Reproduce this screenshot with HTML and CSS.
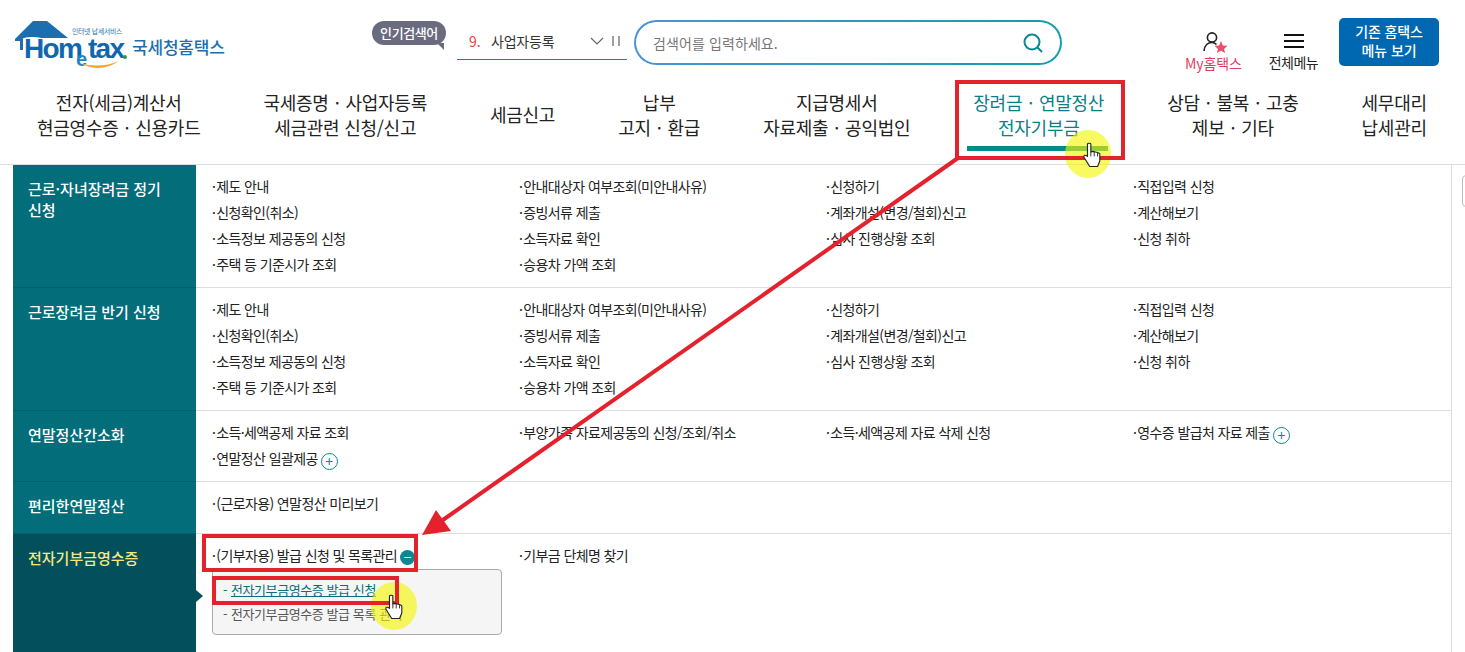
FILE: index.html
```html
<!DOCTYPE html>
<html lang="ko">
<head>
<meta charset="utf-8">
<title>국세청 홈택스</title>
<link rel="stylesheet" href="styles.css">
</head>
<body>
<header class="header">
  <div class="top">
    <a class="logo">
      <svg class="logo-mark" width="115" height="50" viewBox="0 0 115 50">
        <path class="roof" d="M1 19 L19 1 H33 L54 18 H27 C20 16 10 17 8 19 Z"/>
        <path class="wall" d="M1 19 H9 V30 H6 V21 H1 Z"/>
        <text class="w-tiny" x="58" y="14">인터넷 납세서비스</text>
        <text class="w-big" x="10" y="38">Hom</text>
        <text class="w-e" x="62" y="46">e</text>
        <text class="w-big" x="74" y="38">tax</text>
        <circle class="w-dot" cx="111" cy="37" r="2"/>
        <path class="w-smile" d="M66 43 Q86 54 105 41 Q86 49 66 43 Z"/>
      </svg>
      <span class="logo-name">국세청홈택스</span>
    </a>
    <div class="popular">
      <span class="bubble">인기검색어</span>
      <div class="rank">
        <span class="rank-no">9.</span>
        <span class="rank-text">사업자등록</span>
        <svg class="chev" width="14" height="8" viewBox="0 0 14 8"><path d="M1 1 L7 7 L13 1"/></svg>
        <svg class="pause" width="8" height="10" viewBox="0 0 8 10"><path d="M1 0 V10 M7 0 V10"/></svg>
      </div>
    </div>
    <div class="search">
      <div class="search-in">
        <span class="placeholder">검색어를 입력하세요.</span>
        <svg class="search-ico" width="22" height="22" viewBox="0 0 22 22"><circle cx="10" cy="10" r="7.5"/><path d="M15.5 15.5 L20 20"/></svg>
      </div>
    </div>
    <div class="util">
      <a class="util-item my">
        <svg width="28" height="22" viewBox="0 0 28 22"><circle cx="12" cy="6.5" r="4.6" class="u-line"/><path class="u-line" d="M4 20 C4.5 14.5 8 11.5 12 11.5 C14 11.5 15.5 12.5 16.5 13.5"/><path class="u-star" d="M21 10 L22.9 14.4 L27.5 14.8 L24 17.9 L25.1 22 L21 19.8 L16.9 22 L18 17.9 L14.5 14.8 L19.1 14.4 Z"/></svg>
        <span>My홈택스</span>
      </a>
      <a class="util-item all">
        <svg width="22" height="16" viewBox="0 0 22 16"><path class="u-bar" d="M1 2 H21 M1 8 H21 M1 14 H21"/></svg>
        <span>전체메뉴</span>
      </a>
      <a class="old-btn">기존 홈택스<br>메뉴 보기</a>
    </div>
  </div>
  <nav class="nav">
    <a class="nav-item">전자(세금)계산서<br>현금영수증<i class="dot">·</i>신용카드</a>
    <a class="nav-item">국세증명<i class="dot">·</i>사업자등록<br>세금관련 신청/신고</a>
    <a class="nav-item">세금신고</a>
    <a class="nav-item">납부<br>고지<i class="dot">·</i>환급</a>
    <a class="nav-item">지급명세서<br>자료제출<i class="dot">·</i>공익법인</a>
    <a class="nav-item active">장려금<i class="dot">·</i>연말정산<br>전자기부금</a>
    <a class="nav-item">상담<i class="dot">·</i>불복<i class="dot">·</i>고충<br>제보<i class="dot">·</i>기타</a>
    <a class="nav-item">세무대리<br>납세관리</a>
  </nav>
</header>

<main class="board">
  <section class="row r1">
    <h3 class="side">근로·자녀장려금 정기<br>신청</h3>
    <ul class="links">
      <li>제도 안내</li><li>안내대상자 여부조회(미안내사유)</li><li>신청하기</li><li>직접입력 신청</li>
      <li>신청확인(취소)</li><li>증빙서류 제출</li><li>계좌개설(변경/철회)신고</li><li>계산해보기</li>
      <li>소득정보 제공동의 신청</li><li>소득자료 확인</li><li>심사 진행상황 조회</li><li>신청 취하</li>
      <li>주택 등 기준시가 조회</li><li>승용차 가액 조회</li>
    </ul>
  </section>
  <section class="row r1">
    <h3 class="side">근로장려금 반기 신청</h3>
    <ul class="links">
      <li>제도 안내</li><li>안내대상자 여부조회(미안내사유)</li><li>신청하기</li><li>직접입력 신청</li>
      <li>신청확인(취소)</li><li>증빙서류 제출</li><li>계좌개설(변경/철회)신고</li><li>계산해보기</li>
      <li>소득정보 제공동의 신청</li><li>소득자료 확인</li><li>심사 진행상황 조회</li><li>신청 취하</li>
      <li>주택 등 기준시가 조회</li><li>승용차 가액 조회</li>
    </ul>
  </section>
  <section class="row r3">
    <h3 class="side">연말정산간소화</h3>
    <ul class="links">
      <li>소득·세액공제 자료 조회</li><li>부양가족 자료제공동의 신청/조회/취소</li><li>소득·세액공제 자료 삭제 신청</li><li>영수증 발급처 자료 제출<i class="plus">+</i></li>
      <li>연말정산 일괄제공<i class="plus">+</i></li>
    </ul>
  </section>
  <section class="row r4">
    <h3 class="side">편리한연말정산</h3>
    <ul class="links">
      <li>(근로자용) 연말정산 미리보기</li>
    </ul>
  </section>
  <section class="row r5">
    <h3 class="side on">전자기부금영수증</h3>
    <div class="cell">
      <ul class="links">
        <li class="open">(기부자용) 발급 신청 및 목록관리<i class="minus">−</i></li><li>기부금 단체명 찾기</li>
      </ul>
      <div class="sub">
        <a class="sub-item cur">전자기부금영수증 발급 신청</a>
        <a class="sub-item">전자기부금영수증 발급 목록 관리</a>
      </div>
    </div>
  </section>
</main>
<div class="edge"></div>

<svg class="marks" width="1465" height="652" viewBox="0 0 1465 652">
  <ellipse class="glow" cx="1088" cy="154" rx="23" ry="24"/>
  <ellipse class="glow" cx="394" cy="606" rx="23" ry="24"/>
  <rect class="box" x="957" y="82" width="166" height="76"/>
  <rect class="box" x="204" y="536" width="212" height="34"/>
  <rect class="box" x="214" y="578" width="183" height="25"/>
  <path class="line" d="M958 158 L440 522"/>
  <path class="head" d="M422 535 L436 510 L451 531 Z"/>
  <g transform="translate(1083 143) scale(1.12)"><path class="hand" d="M4 1 C4 0 7 0 7 1 V8 L9 7.5 L11 8 L13 8.5 L15 9.5 V16 L13 21 H6 L1 13 C0 11 2 10 4 12 Z"/><path class="hand-l" d="M7 8 V12 M10 8 V12 M13 9 V12"/></g>
  <g transform="translate(385 595) scale(1.12)"><path class="hand" d="M4 1 C4 0 7 0 7 1 V8 L9 7.5 L11 8 L13 8.5 L15 9.5 V16 L13 21 H6 L1 13 C0 11 2 10 4 12 Z"/><path class="hand-l" d="M7 8 V12 M10 8 V12 M13 9 V12"/></g>
</svg>
</body>
</html>
```
FILE: styles.css
```css
* { box-sizing: border-box; }
html, body { margin: 0; padding: 0; }
body {
  position: relative;
  width: 1465px;
  height: 652px;
  overflow: hidden;
  background: #fff;
  color: #222;
  font-family: "Noto Sans CJK KR", "Noto Sans", sans-serif;
}
ul { list-style: none; margin: 0; padding: 0; }
h3 { margin: 0; }

.header { height: 165px; border-bottom: 1px solid #ddd; }
.top { display: flex; height: 80px; padding: 18px 26px 0 14px; }

.logo { display: flex; width: 211px; height: 50px; align-items: flex-start; margin-top: 2px; }
.logo-mark { flex: none; }
.roof, .wall { fill: #1b6fb1; }
.w-tiny { font-size: 6.8px; fill: #1b6fb1; letter-spacing: -.2px; }
.w-big { font-family: "Liberation Sans", sans-serif; font-weight: 700; font-size: 28px; fill: #0f67ad; letter-spacing: -1.7px; }
.w-e { font-family: "Liberation Sans", sans-serif; font-weight: 700; font-size: 20px; fill: #1b86c8; }
.w-dot { fill: #2f9a4a; }
.w-smile { fill: #f2a433; }
.logo-name { margin: 16px 0 0 3px; font-size: 17px; line-height: 22px; font-weight: 500; color: #1b6fb1; letter-spacing: -.2px; white-space: nowrap; }

.popular { display: flex; margin-left: 147px; width: 255px; }
.bubble {
  position: relative;
  width: 74px; height: 24px; margin-top: 3px;
  background: #6b6b80; color: #fff;
  border-radius: 12px;
  font-size: 13px; line-height: 23px; font-weight: 500; text-align: center; letter-spacing: -.4px;
}
.bubble::after {
  content: ""; position: absolute; right: 2px; bottom: -5px;
  border-left: 7px solid transparent; border-top: 7px solid #6b6b80;
}
.rank {
  display: flex; align-items: center;
  width: 170px; height: 42px; margin-left: 11px;
  padding: 4px 0 0 12px;
  border-bottom: 1px solid #0e8a94;
  font-size: 14px;
}
.rank-no { width: 22px; color: #e2453f; }
.rank-text { width: 99px; color: #333; letter-spacing: -.2px; }
.chev { fill: none; stroke: #666; stroke-width: 1.2; }
.pause { margin-left: 8px; fill: none; stroke: #777; stroke-width: 1.4; }

.search {
  width: 428px; height: 45px; margin: 2px 0 0 7px; padding: 2px;
  border-radius: 23px;
  background: linear-gradient(90deg, #4a93d8, #12a0a8);
}
.search-in {
  display: flex; align-items: center; justify-content: space-between;
  height: 41px; padding: 0 16px 0 17px;
  background: #fff; border-radius: 21px;
}
.placeholder { font-size: 14px; color: #777; letter-spacing: .1px; }
.search-ico { fill: none; stroke: #0d8791; stroke-width: 2; }

.util { display: flex; margin-left: 122px; }
.util-item { display: flex; flex-direction: column; align-items: center; white-space: nowrap; }
.my { width: 59px; padding-top: 13px; color: #e0405f; font-size: 14px; letter-spacing: -.1px; }
.my span { line-height: 20px; }
.all { width: 51px; margin-left: 25px; padding-top: 15px; color: #222; font-size: 14px; letter-spacing: -.5px; }
.all svg { margin-bottom: 3px; }
.all span { line-height: 20px; }
.u-line { fill: none; stroke: #222; stroke-width: 1.6; }
.u-star { fill: #e8506c; }
.u-bar { fill: none; stroke: #111; stroke-width: 2; }
.old-btn {
  width: 100px; height: 48px; margin-left: 20px;
  padding-top: 4px;
  background: #0068b0; color: #fff; border-radius: 5px;
  font-size: 14px; line-height: 19px; font-weight: 500; text-align: center; letter-spacing: -.1px;
}

.nav { display: flex; gap: 63px; height: 84px; padding-left: 37px; }
.nav-item {
  display: block; align-self: center; text-align: center;
  position: relative;
  font-size: 18px; line-height: 25px; letter-spacing: -.26px; color: #222; white-space: nowrap;
  margin-top: -15px;
}
.dot { font-style: normal; padding: 0 6px; }
.nav-item.active { color: #0b7f87; }
.nav-item.active::after {
  content: ""; position: absolute; left: -6px; right: -4px; top: 56px; height: 5px;
  background: #008b8f;
}

.board { width: 1439px; margin-left: 13px; border-right: 1px solid #ddd; }
.row { display: flex; border-bottom: 1px solid #ddd; }
.r1 { height: 123px; }
.r3 { height: 71px; }
.r4 { height: 52px; }
.r5 { height: 118px; border-bottom: 0; }
.side {
  flex: none; width: 183px; padding: 13px 10px 0 15px;
  background: #046d7a; color: #fff;
  font-size: 15px; line-height: 21px; font-weight: 500; letter-spacing: 0;
  border-bottom: 1px solid #03606c; margin-bottom: -1px;
}
.side.on { position: relative; background: #03505c; color: #f4ea7c; }
.side.on::after {
  content: ""; position: absolute; right: -7px; top: 56px;
  border-left: 7px solid #03505c; border-top: 6px solid transparent; border-bottom: 6px solid transparent;
}
.links {
  display: grid; grid-template-columns: repeat(4, 307px); grid-auto-rows: 26px; align-content: start;
  padding: 8px 0 0 16px;
  font-size: 14px; line-height: 26px; letter-spacing: -.62px; color: #222;
}
.links li { white-space: nowrap; }
.links li::before { content: "·"; margin-right: 1px; }
.plus, .minus {
  display: inline-block; width: 17px; height: 17px; margin-left: 3px;
  border-radius: 50%; vertical-align: -3px;
  font-style: normal; font-size: 14px; line-height: 14px; text-align: center; letter-spacing: 0;
}
.plus { border: 1px solid #0d8791; color: #0d8791; }
.minus { width: 15px; height: 15px; background: #0d8791; color: #fff; vertical-align: -2px; margin-left: 3px; line-height: 15px; }
.cell { flex: 1; }
.sub {
  width: 290px; height: 66px; margin: 1px 0 0 16px; padding: 8px 0 0 10px;
  background: #f5f5f5; border: 1px solid #aaa; border-radius: 4px;
  font-size: 13px; line-height: 24px; letter-spacing: -.42px; color: #555;
}
.sub-item { display: block; white-space: nowrap; }
.sub-item::before { content: "-"; display: inline-block; width: 8px; text-decoration: none; }
.sub-item.cur { color: #0b6f7a; text-decoration: underline; }
.edge {
  position: absolute; right: -10px; top: 175px;
  width: 13px; height: 32px; border: 1px solid #bbb; border-radius: 4px;
}

.marks { position: absolute; left: 0; top: 0; pointer-events: none; }
.glow { fill: #f5f500; opacity: .62; }
.box { fill: none; stroke: #e4222e; stroke-width: 4; }
.line { fill: none; stroke: #e4222e; stroke-width: 4; }
.head { fill: #e4222e; }
.hand { fill: #fff; stroke: #222; stroke-width: 1; stroke-linejoin: round; }
.hand-l { fill: none; stroke: #222; stroke-width: .8; }
```
